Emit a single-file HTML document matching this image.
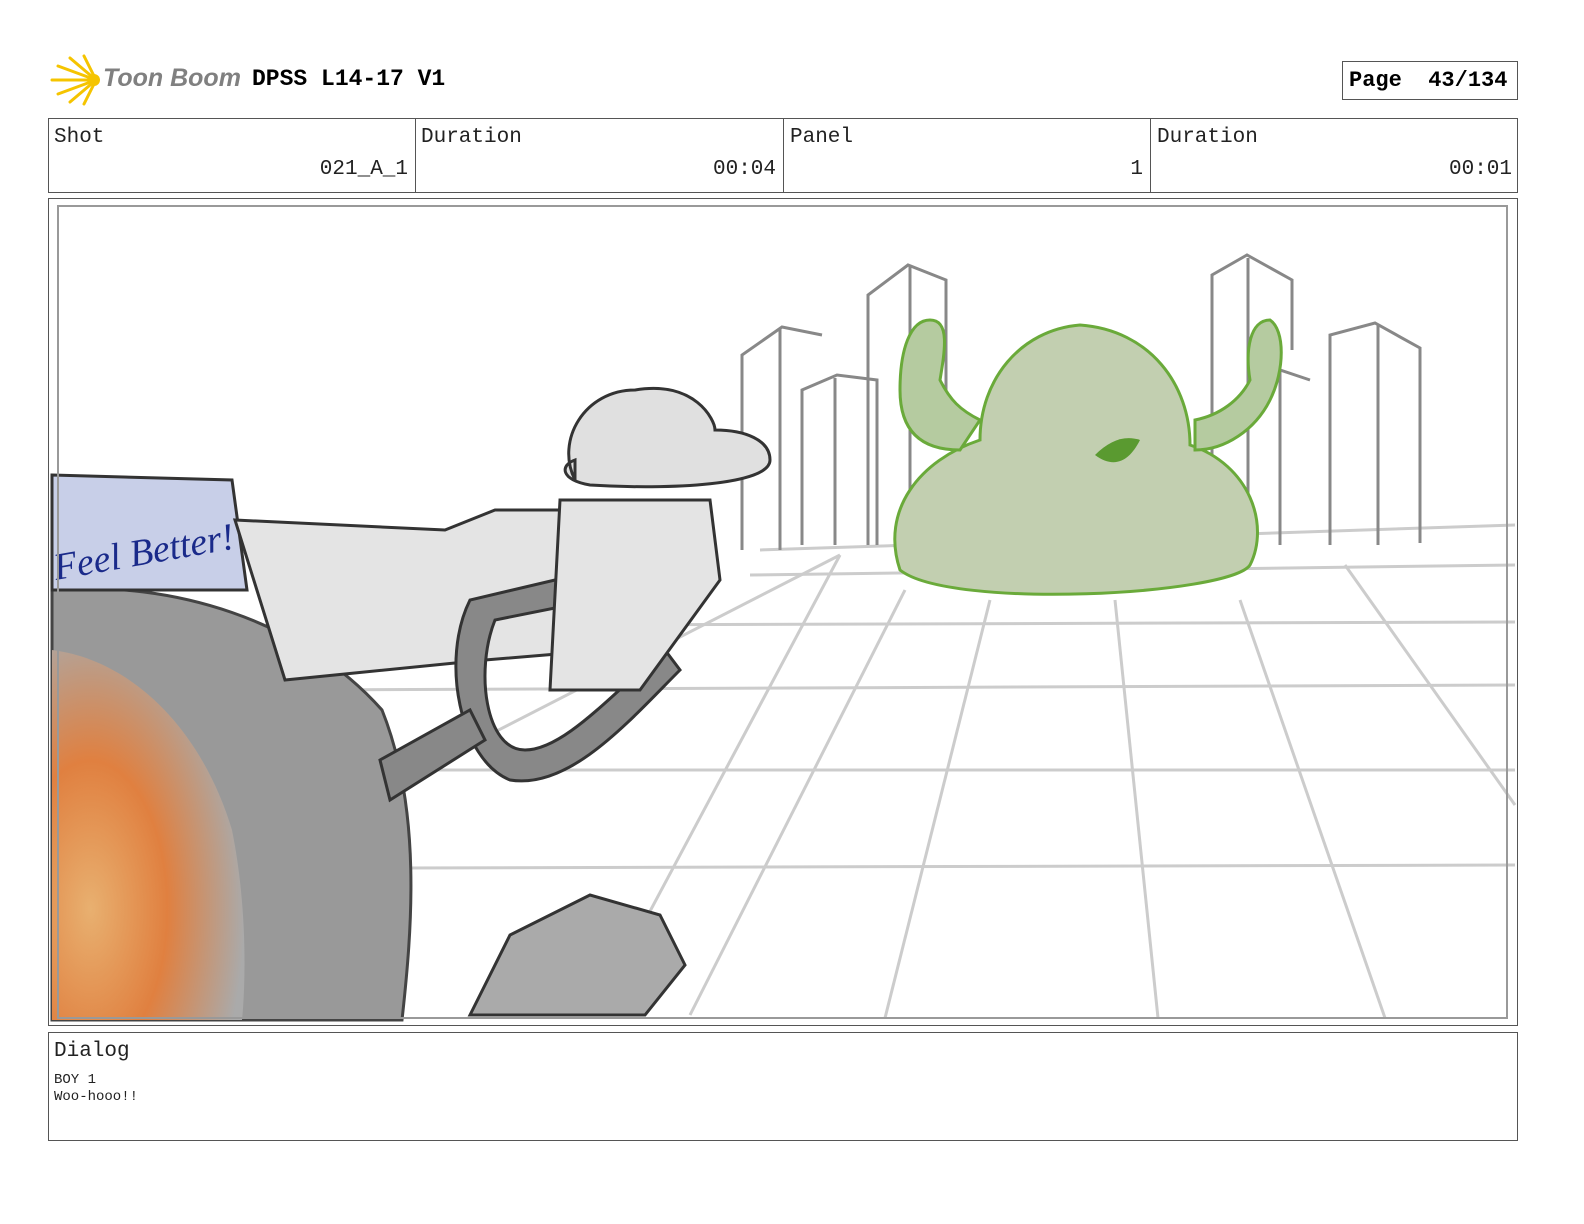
<!DOCTYPE html>
<html><head><meta charset="utf-8"><style>
body{margin:0;width:1584px;height:1224px;background:#fff;position:relative;overflow:hidden;font-family:"Liberation Mono",monospace;color:#222}
.a{position:absolute}
.box{position:absolute;border:1px solid #555;box-sizing:border-box}
.lbl{position:absolute;font-size:21px}
</style></head><body>
<svg class="a" style="left:48px;top:54px" width="56" height="52" viewBox="0 0 56 52">
<g stroke="#f5c400" stroke-width="3" stroke-linecap="round">
<line x1="48" y1="26" x2="4" y2="26"/><line x1="48" y1="26" x2="10" y2="12"/><line x1="48" y1="26" x2="10" y2="40"/>
<line x1="48" y1="26" x2="22" y2="4"/><line x1="48" y1="26" x2="22" y2="48"/><line x1="48" y1="26" x2="36" y2="2"/><line x1="48" y1="26" x2="36" y2="50"/></g>
<circle cx="46" cy="26" r="6" fill="#f5c400"/></svg>
<div class="a" style="left:103px;top:64px;font:italic bold 25px 'Liberation Sans',sans-serif;color:#808080">Toon Boom</div>
<div class="a" style="left:252px;top:66px;font-weight:bold;font-size:23px;color:#000">DPSS L14-17 V1</div>
<div class="box" style="left:1342px;top:61px;width:176px;height:39px"></div>
<div class="a" style="left:1349px;top:68px;font-weight:bold;font-size:22px;color:#000">Page&nbsp;&nbsp;43/134</div>

<div class="box" style="left:48px;top:118px;width:1470px;height:75px"></div>
<div class="a" style="left:415px;top:118px;width:1px;height:75px;background:#555"></div>
<div class="a" style="left:783px;top:118px;width:1px;height:75px;background:#555"></div>
<div class="a" style="left:1150px;top:118px;width:1px;height:75px;background:#555"></div>
<div class="lbl" style="left:54px;top:126px">Shot</div>
<div class="lbl" style="left:421px;top:126px">Duration</div>
<div class="lbl" style="left:790px;top:126px">Panel</div>
<div class="lbl" style="left:1157px;top:126px">Duration</div>
<div class="lbl" style="right:1176px;top:158px">021_A_1</div>
<div class="lbl" style="right:808px;top:158px">00:04</div>
<div class="lbl" style="right:441px;top:158px">1</div>
<div class="lbl" style="right:72px;top:158px">00:01</div>

<div class="box" style="left:48px;top:198px;width:1470px;height:828px"></div>
<svg class="a" style="left:48px;top:198px" width="1470" height="828" viewBox="48 198 1470 828">
<defs><radialGradient id="f" cx="0.2" cy="0.7" r="0.8"><stop offset="0" stop-color="#e8b070"/><stop offset="0.5" stop-color="#e08040"/><stop offset="1" stop-color="#aaa"/></radialGradient></defs>
<g stroke="#ccc" stroke-width="3" fill="none">
<line x1="300" y1="690" x2="1515" y2="685"/><line x1="380" y1="770" x2="1515" y2="770"/><line x1="400" y1="868" x2="1515" y2="865"/>
<line x1="560" y1="625" x2="1515" y2="622"/><line x1="750" y1="575" x2="1515" y2="565"/><line x1="760" y1="550" x2="1515" y2="525"/>
<line x1="840" y1="555" x2="640" y2="930"/><line x1="905" y1="590" x2="690" y2="1015"/><line x1="990" y1="600" x2="885" y2="1018"/>
<line x1="1115" y1="600" x2="1158" y2="1018"/><line x1="1240" y1="600" x2="1385" y2="1018"/><line x1="1345" y1="565" x2="1515" y2="805"/>
<line x1="840" y1="555" x2="440" y2="760"/></g>
<g stroke="#888" stroke-width="3" fill="none">
<path d="M742 550V355l40-28 40 8M780 328v222M802 545V390l35-15 40 5v165M835 378v167M868 545V295l40-30 38 15v140M910 265v265"/>
<path d="M1212 545V275l35-20 45 25v70M1248 258v280M1330 545V335l45-12 45 25v195M1378 325v220M1280 545V370l30 10"/>
</g>
<path d="M900 570c-20-60 20-110 80-130 0-60 40-110 100-115 70 5 110 60 110 120 60 20 80 80 60 120-20 30-300 45-350 5z" fill="#c2cfb0" stroke="#6aaa3a" stroke-width="3"/>
<path d="M960 450c-40 0-60-20-60-60 0-40 10-70 30-70s15 30 10 60c10 20 20 30 40 40zM1195 450c30 0 60-20 75-50 15-30 15-70 0-80-20 0-25 30-20 60-10 20-30 35-55 40z" fill="#b5cba0" stroke="#6aaa3a" stroke-width="3"/>
<path d="M1095 455c15-15 30-20 45-15-10 20-25 30-45 15z" fill="#5a9a30"/>
<path d="M52 590c120-10 250 30 330 120 40 100 30 220 20 310H52z" fill="#999" stroke="#444" stroke-width="3"/>
<path d="M52 650c80 10 150 80 180 180 20 100 10 190 10 190H52z" fill="url(#f)"/>
<path d="M52 475l180 5 15 110-195 0z" fill="#c8cfe8" stroke="#333" stroke-width="3"/>
<text x="56" y="580" font-family="Liberation Serif" font-style="italic" font-size="38" fill="#1a2a8a" transform="rotate(-10 56 580)">Feel Better!</text>
<path d="M235 520l210 10 50-20 180 0 30 40-20 70-80 30-120 10-200 20z" fill="#e4e4e4" stroke="#333" stroke-width="3"/>
<path d="M470 600c-30 60-10 160 40 180 60 10 120-60 170-110l-15-20c-50 40-100 100-140 100-40 0-50-80-30-130l150-30-5-30z" fill="#888" stroke="#333" stroke-width="3"/>
<path d="M380 760l90-50 15 30-95 60z" fill="#888" stroke="#333" stroke-width="3"/>
<path d="M575 480c-20-40 10-90 60-90 60-10 80 30 80 40 30 0 55 10 55 30 0 25-100 30-180 25-30-5-30-20-15-25z" fill="#e0e0e0" stroke="#333" stroke-width="3"/>
<path d="M560 500l150 0 10 80-80 110-90 0z" fill="#e4e4e4" stroke="#333" stroke-width="3"/>
<path d="M470 1015l40-80 80-40 70 20 25 50-40 50z" fill="#aaa" stroke="#333" stroke-width="3"/>
<rect x="58" y="206" width="1449" height="812" fill="none" stroke="#999" stroke-width="2"/>
</svg>

<div class="box" style="left:48px;top:1032px;width:1470px;height:109px"></div>
<div class="lbl" style="left:54px;top:1040px">Dialog</div>
<div class="a" style="left:54px;top:1072px;font-size:14px;line-height:17px">BOY 1<br>Woo-hooo!!</div>
</body></html>
